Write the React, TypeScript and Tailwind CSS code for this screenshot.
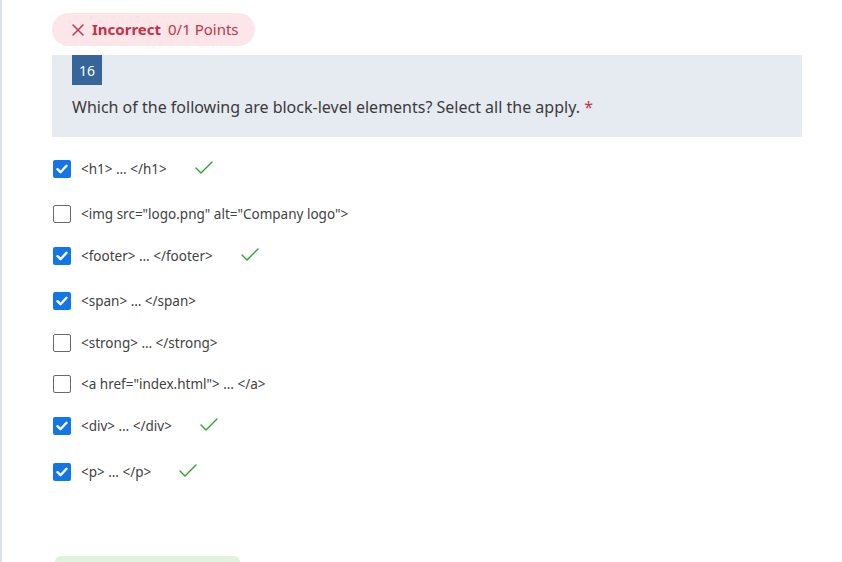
import { Check, X } from "lucide-react";

// mt is the space above each row, taken from the screenshot
const options = [
  { id: 1, label: "<h1> … </h1>", checked: true, correct: true, mt: "mt-[20px]" },
  { id: 2, label: '<img src="logo.png" alt="Company logo">', checked: false, correct: false, mt: "mt-[21px]" },
  { id: 3, label: "<footer> … </footer>", checked: true, correct: true, mt: "mt-[18px]" },
  { id: 4, label: "<span> … </span>", checked: true, correct: false, mt: "mt-[21px]" },
  { id: 5, label: "<strong> … </strong>", checked: false, correct: false, mt: "mt-[18px]" },
  { id: 6, label: '<a href="index.html"> … </a>', checked: false, correct: false, mt: "mt-[17px]" },
  { id: 7, label: "<div> … </div>", checked: true, correct: true, mt: "mt-[18px]" },
  { id: 8, label: "<p> … </p>", checked: true, correct: true, mt: "mt-[22px]" },
];

function Box({ checked }: { checked: boolean }) {
  if (checked) {
    return (
      <span className="w-[18px] h-[18px] rounded-[2px] bg-[#1276e8] flex items-center justify-center shrink-0">
        <svg width="12" height="10" viewBox="0 0 12 10" fill="none">
          <path d="M1.5 5.2 L4.5 8.2 L10.5 1.8" stroke="white" strokeWidth="2.4" strokeLinecap="round" strokeLinejoin="round" />
        </svg>
      </span>
    );
  }
  return <span className="w-[18px] h-[18px] rounded-[2px] border border-[#6b6b6b] bg-white shrink-0" />;
}

export default function App() {
  return (
    <div className="w-[842px] h-[562px] overflow-hidden bg-white flex" style={{ fontFamily: '"Noto Sans", "Open Sans", sans-serif' }}>
      <div className="w-[2px] bg-[#dde1ea] shrink-0" />
      <div className="flex-1 pl-[50px] pr-[40px] pt-[13px] flex flex-col">
        {/* result pill */}
        <div className="self-start h-[33px] pl-[16px] pr-[16px] rounded-full bg-[#fde6e9] flex items-center text-[15px] text-[#c4314b]">
          <X size={20} strokeWidth={1.7} />
          <span className="ml-[4px] font-bold">Incorrect</span>
          <span className="ml-[7px]">0/1 Points</span>
        </div>

        {/* question */}
        <div className="mt-[9px] bg-[#e6eaf1] px-[20px] pb-[19px]">
          <div className="w-[30px] h-[30px] bg-[#35659a] text-white text-[14px] flex items-center justify-center">16</div>
          <p className="mt-[11px] text-[16px] text-[#3b3b3b] leading-[22px]">
            Which of the following are block-level elements? Select all the apply.{" "}
            <span className="text-[#c4314b]">*</span>
          </p>
        </div>

        {/* options */}
        <div className="flex flex-col">
          {options.map((o) => (
            <div key={o.id} className={`flex items-center h-[24px] pl-[1px] ${o.mt}`}>
              <Box checked={o.checked} />
              <span className="ml-[10px] text-[13.5px] text-[#424242]">{o.label}</span>
              {o.correct && <Check size={24} strokeWidth={1.4} className="ml-[25px] -mt-[3px] text-[#2ea62e]" />}
            </div>
          ))}
        </div>

        <div className="mt-auto ml-[3px] w-[185px] h-[6px] rounded-t-full bg-[#dff3de]" />
      </div>
    </div>
  );
}
